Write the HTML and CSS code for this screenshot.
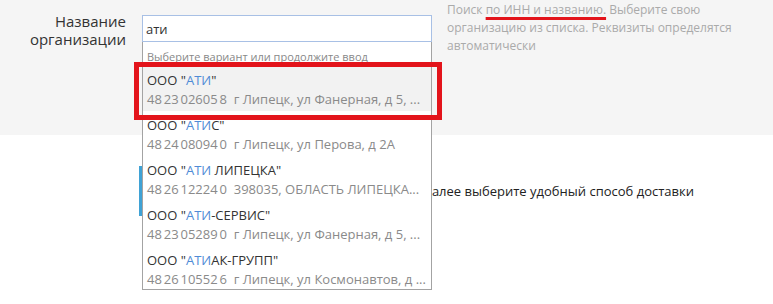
FILE: index.html
```html
<!doctype html>
<html lang="ru">

<head>
    <meta charset="UTF-8">
    <meta name="viewport" content="width=device-width, initial-scale=1.0">
    <title>Организация</title>
    <link rel="stylesheet" href="styles.css">
</head>

<body>
    <section class="band">
        <div class="field-row">
            <label class="field-label" for="org">Название<br>организации</label>
            <div class="field">
                <input id="org" class="field-input" type="text" value="ати">
                <div class="suggest">
                    <div class="suggest--hint">Выберите вариант или продолжите ввод</div>
                    <div class="suggest--item suggest--item-active">
                        <div class="suggest--title">ООО "<b>АТИ</b>"</div>
                        <div class="suggest--sub"><span class="inn">48 23 02605 8</span> &nbsp;г Липецк, ул Фанерная, д 5, ...</div>
                    </div>
                    <div class="suggest--item">
                        <div class="suggest--title">ООО "<b>АТИ</b>С"</div>
                        <div class="suggest--sub"><span class="inn">48 24 08094 0</span> &nbsp;г Липецк, ул Перова, д 2А</div>
                    </div>
                    <div class="suggest--item">
                        <div class="suggest--title">ООО "<b>АТИ</b> ЛИПЕЦКА"</div>
                        <div class="suggest--sub"><span class="inn">48 26 12224 0</span> &nbsp;398035, ОБЛАСТЬ ЛИПЕЦКА...</div>
                    </div>
                    <div class="suggest--item">
                        <div class="suggest--title">ООО "<b>АТИ</b>-СЕРВИС"</div>
                        <div class="suggest--sub"><span class="inn">48 23 05289 0</span> &nbsp;г Липецк, ул Фанерная, д 5, ...</div>
                    </div>
                    <div class="suggest--item suggest--item-last">
                        <div class="suggest--title">ООО "<b>АТИ</b>АК-ГРУПП"</div>
                        <div class="suggest--sub"><span class="inn">48 26 10552 6</span> &nbsp;г Липецк, ул Космонавтов, д ...</div>
                    </div>
                </div>
                <div class="mark-box"></div>
            </div>
            <p class="field-help">Поиск <span class="mark-line">по ИНН и названию.</span> Выберите свою организацию из списка. Реквизиты определятся автоматически</p>
        </div>
    </section>

    <div class="next-step">Далее выберите удобный способ доставки</div>
</body>

</html>
```

FILE: styles.css
```css
html,
body {
    min-height: 304px;
}

body {
    margin: 0;
    font-family: "Open Sans", "DejaVu Sans", sans-serif;
    color: #333333;
    background-color: #ffffff;
}

.band {
    position: relative;
    z-index: 2;
    height: 135px;
    box-sizing: border-box;
    padding-top: 1px;
    background-color: #f5f5f5;
}

.field-row {
    display: flex;
    align-items: flex-start;
}

.field-label {
    width: 126px;
    margin-top: 11px;
    text-align: right;
    font-size: 15px;
    line-height: 18px;
    color: #333333;
}

.field {
    position: relative;
    width: 290px;
    margin-top: 14px;
    margin-left: 16px;
}

.field-input {
    display: block;
    width: 290px;
    height: 27px;
    box-sizing: border-box;
    margin: 0;
    padding: 0 3px;
    border: 1px solid #a8c0e5;
    font-family: "Open Sans", sans-serif;
    font-size: 13px;
    color: #333333;
    background-color: #ffffff;
    outline: none;
}

.suggest {
    position: absolute;
    top: 27px;
    left: 0;
    z-index: 2;
    width: 290px;
    box-sizing: border-box;
    border: 1px solid #a3a3a3;
    border-top: none;
    background-color: #ffffff;
}

.suggest--hint {
    padding: 5px 0 0 4px;
    height: 24px;
    box-sizing: border-box;
    font-size: 11px;
    line-height: 20px;
    color: #888888;
}

.suggest--item {
    padding: 5px 4px 2px;
    white-space: nowrap;
    overflow: hidden;
}

.suggest--item-active {
    background-color: #f2f2f2;
}

.suggest--item-last {
    padding-bottom: 0;
}

.suggest--title {
    font-size: 13px;
    line-height: 19px;
    color: #333333;
}

.suggest--title b {
    font-weight: normal;
    color: #4f8bd6;
}

.suggest--sub {
    font-size: 13px;
    line-height: 19px;
    color: #8a8a8a;
}

.inn {
    word-spacing: -1.5px;
}

.mark-box {
    position: absolute;
    top: 47px;
    left: -8px;
    z-index: 3;
    width: 308px;
    height: 58px;
    box-sizing: border-box;
    border: 5px solid #e3141b;
}

.field-help {
    width: 300px;
    margin: 0 0 0 15px;
    font-size: 12px;
    line-height: 18px;
    color: #aaaaaa;
}

.mark-line {
    text-decoration: underline;
    text-decoration-color: #e3141b;
    text-decoration-thickness: 3px;
    text-underline-offset: 3px;
}

.next-step {
    height: 50px;
    margin: 31px 0 0 139px;
    padding-left: 281px;
    border-left: 3px solid #3fa2d5;
    font-size: 13px;
    line-height: 50px;
    color: #222222;
}
```
